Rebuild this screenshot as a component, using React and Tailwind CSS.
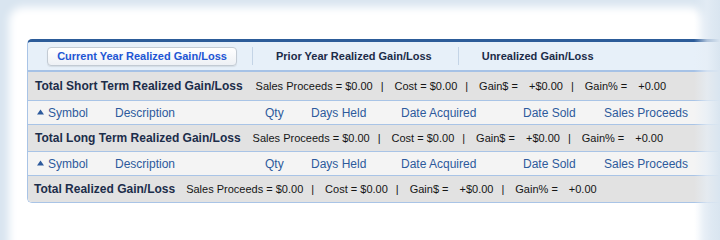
import React from "react";

function Tri() {
  return (
    <svg width="7" height="6" viewBox="0 0 7 6" className="mr-[4px] mt-[-1px]">
      <polygon points="3.5,0.5 7,5.5 0,5.5" fill="#2d5a9c" />
    </svg>
  );
}

function Sep() {
  return <span className="ml-[8px] mr-[11px]">|</span>;
}

function Summary({ title, h, gap }) {
  return (
    <div className={`flex items-center ${h} bg-[#e2e2e2] border-b border-[#a9c4e6] pl-[7px] whitespace-nowrap`}>
      <span className="text-[12px] font-bold text-[#1c2d4a]">{title}</span>
      <div className={`flex items-center text-[11px] text-[#151515] ${gap}`}>
        <span>Sales Proceeds = $0.00</span>
        <Sep />
        <span>Cost = $0.00</span>
        <Sep />
        <span>Gain$ =</span>
        <span className="ml-[11px]">+$0.00</span>
        <Sep />
        <span>Gain% =</span>
        <span className="ml-[11px]">+0.00</span>
      </div>
    </div>
  );
}

function Header() {
  return (
    <div className="flex items-center h-[24px] bg-[#f4f4f4] border-b border-[#a9c4e6] pl-[9px] text-[12px] text-[#2d5a9c] whitespace-nowrap">
      <div className="w-[78px] flex items-center">
        <Tri />
        <span>Symbol</span>
      </div>
      <div className="w-[150px]">Description</div>
      <div className="w-[46px]">Qty</div>
      <div className="w-[90px]">Days Held</div>
      <div className="w-[122px]">Date Acquired</div>
      <div className="w-[81px]">Date Sold</div>
      <div>Sales Proceeds</div>
    </div>
  );
}

export default function App() {
  return (
    <div
      className="relative w-[720px] h-[240px] overflow-hidden bg-[#d9e5f0]"
      style={{ fontFamily: '"Liberation Sans", Arial, sans-serif' }}
    >
      <div className="absolute left-[9px] top-[7px] right-[16px] bottom-[-30px] bg-white rounded-[14px] blur-[4px]" />
      <div className="relative pl-[27px] pt-[39px]">
        <div className="w-[720px] border-t-[3px] border-t-[#2c5c99] border-l border-l-[#a9c4e6] border-b border-b-[#a9c4e6] rounded-tl-[5px] rounded-bl-[5px] overflow-hidden">
          <div className="flex items-center h-[30px] bg-[#e7f0f9] border-b-2 border-[#a6c2e6] whitespace-nowrap text-[11px] font-bold">
            <div className="ml-[19px] w-[190px] h-[19px] flex items-center justify-center rounded-[4px] border border-[#c3cbd4] bg-gradient-to-b from-white to-[#eef1f5] shadow-[0_1px_1px_rgba(0,0,0,0.08)] text-[#1d55d4]">
              Current Year Realized Gain/Loss
            </div>
            <div className="ml-[15px] w-px h-[18px] bg-[#c4d4e6]" />
            <span className="ml-[23px] text-[#1b2b48]">Prior Year Realized Gain/Loss</span>
            <div className="ml-[26px] w-px h-[18px] bg-[#c4d4e6]" />
            <span className="ml-[23px] text-[#1b2b48]">Unrealized Gain/Loss</span>
          </div>
          <Summary title="Total Short Term Realized Gain/Loss" h="h-[29px]" gap="ml-[13px]" />
          <Header />
          <Summary title="Total Long Term Realized Gain/Loss" h="h-[27px]" gap="ml-[12px]" />
          <Header />
          <div className="flex items-center h-[26px] bg-[#e2e2e2] pl-[6px] whitespace-nowrap">
            <span className="text-[12px] font-bold text-[#1c2d4a]">Total Realized Gain/Loss</span>
            <div className="flex items-center text-[11px] text-[#151515] ml-[11px]">
              <span>Sales Proceeds = $0.00</span>
              <Sep />
              <span>Cost = $0.00</span>
              <Sep />
              <span>Gain$ =</span>
              <span className="ml-[11px]">+$0.00</span>
              <Sep />
              <span>Gain% =</span>
              <span className="ml-[11px]">+0.00</span>
            </div>
          </div>
        </div>
      </div>
      <div className="absolute top-0 bottom-0 right-0 w-[26px] bg-gradient-to-r from-transparent via-[#e6eef6]/70 to-[#d9e5f0]" />
    </div>
  );
}
